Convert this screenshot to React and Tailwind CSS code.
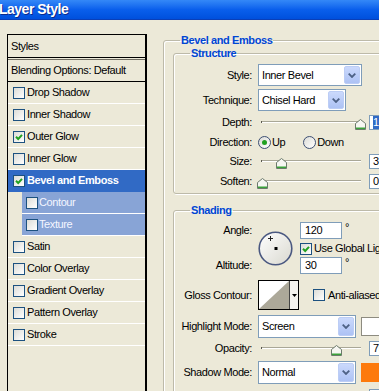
import React from 'react';

const styleRows = [
  { name: 'Drop Shadow' },
  { name: 'Inner Shadow' },
  { name: 'Outer Glow', checked: true },
  { name: 'Inner Glow' },
  { name: 'Bevel and Emboss', checked: true, active: true },
  { name: 'Contour', sub: true },
  { name: 'Texture', sub: true },
  { name: 'Satin' },
  { name: 'Color Overlay' },
  { name: 'Gradient Overlay' },
  { name: 'Pattern Overlay' },
  { name: 'Stroke' },
];

function Check({ checked }) {
  return (
    <span className="flex h-[12px] w-[12px] shrink-0 items-center justify-center border border-[#1c5180] bg-gradient-to-br from-[#dcdcd7] to-white">
      {checked && (
        <svg width="8" height="8" viewBox="0 0 8 8">
          <path d="M1 3.8 L3.2 6 L7 1.8" fill="none" stroke="#21a121" strokeWidth="2" />
        </svg>
      )}
    </span>
  );
}

function Radio({ checked }) {
  return (
    <span className="flex h-[13px] w-[13px] shrink-0 items-center justify-center rounded-full border border-[#3d4f73] bg-gradient-to-br from-[#dcdcd7] to-white">
      {checked && <span className="h-[5px] w-[5px] rounded-full bg-[#21a121]" />}
    </span>
  );
}

function Select({ value, width }) {
  return (
    <div className={`flex h-full items-center border border-[#7f9db9] bg-white pl-[3px] ${width}`}>
      <span>{value}</span>
      <span className="ml-auto mr-[1px] flex h-[calc(100%-2px)] w-[16px] items-center justify-center rounded-[2px] border border-[#bccdf5] bg-gradient-to-b from-[#cbd9fc] to-[#adc2f4]">
        <svg width="8" height="5" viewBox="0 0 8 5">
          <path d="M0.7 0.7 L4 4 L7.3 0.7" fill="none" stroke="#4d6185" strokeWidth="1.8" />
        </svg>
      </span>
    </div>
  );
}

function Thumb() {
  return (
    <svg width="11" height="11" viewBox="0 0 11 11">
      <path d="M5.5 0.5 L10.5 4.5 V10.5 H0.5 V4.5 Z" fill="#f6f6f2" stroke="#6c7a6c" />
      <rect x="1" y="8.5" width="9" height="1.5" fill="#3aa23a" />
    </svg>
  );
}

function Slider({ pos }) {
  return (
    <div className="relative h-[16px] w-[106px]">
      <div className="absolute left-[4px] right-[3px] top-[7px] h-[2px] border-t border-b border-t-[#a9a797] border-b-white" />
      <div className="absolute left-[3px] top-[7px] h-[2px] w-[1px] bg-[#5a5a50]" />
      <div className={`absolute top-[5px] h-[11px] ${pos}`}>
        <Thumb />
      </div>
    </div>
  );
}

function ValueBox({ children }) {
  return (
    <div className="ml-[5px] flex h-[15px] w-[40px] items-center border border-[#7f9db9] bg-white pl-[3px]">
      {children}
    </div>
  );
}

function Row({ label, className, children }) {
  return (
    <div className={`flex items-center ${className}`}>
      <span className="w-[78px] shrink-0 text-right">{label}</span>
      <div className="ml-[6px] flex h-full items-center">{children}</div>
    </div>
  );
}

function Legend({ children }) {
  return <legend className="ml-[16px] px-[1px] font-bold leading-[13px] text-[#0046d5]">{children}</legend>;
}

export default function App() {
  return (
    <div className="h-[391px] w-[379px] overflow-hidden bg-[#ece9d8] font-['Liberation_Sans',Arial,sans-serif] text-[11px] leading-[13px] tracking-[-0.4px] text-black">
      {/* Title bar */}
      <div className="h-[20px] border-b border-[#0a3fb8] bg-gradient-to-b from-[#3488f7] via-[#0a5fec] to-[#0050dd]">
        <span className="-ml-[1px] text-[14px] font-bold leading-[18px] tracking-[-0.5px] text-white [text-shadow:1px_1px_0_#0c2a8a]">
          Layer Style
        </span>
      </div>

      <div className="flex items-start pt-[14px]">
        {/* Styles list */}
        <div className="ml-[7px] h-[380px] w-[140px] shrink-0 border-t border-l border-r-2 border-black">
          <div className="flex h-[23px] items-center border-b border-black pl-[3px]">Styles</div>
          <div className="h-[2px] border-b border-[#716f64]" />
          <div className="flex h-[22px] items-center border-b border-black pl-[3px]">Blending Options: Default</div>
          {styleRows.map((row) =>
            row.sub ? (
              <div key={row.name} className="flex h-[22px] pl-[14px]">
                <div className="flex flex-1 items-center gap-[1px] border-b border-white bg-[#88a4d6] pl-[4px] text-[#f4f6ff]">
                  <Check />
                  <span>{row.name}</span>
                </div>
              </div>
            ) : (
              <div
                key={row.name}
                className={`flex h-[22px] items-center gap-[2px] border-b pl-[5px] ${
                  row.active ? 'border-[#316ac5] bg-[#316ac5] font-bold text-white' : 'border-white'
                }`}
              >
                <Check checked={row.checked} />
                <span>{row.name}</span>
              </div>
            )
          )}
        </div>

        {/* Settings */}
        <fieldset className="ml-[16px] h-[400px] w-[260px] shrink-0 rounded-[3px] border border-[#bdbaa9] shadow-[inset_1px_1px_0_#fff]">
          <Legend>Bevel and Emboss</Legend>

          <fieldset className="ml-[9px] w-[240px] rounded-[3px] border border-[#bdbaa9] pb-[4px] shadow-[inset_1px_1px_0_#fff,1px_1px_0_#fff]">
            <Legend>Structure</Legend>
            <Row label="Style:" className="mt-[4px] h-[22px]">
              <Select value="Inner Bevel" width="w-[104px]" />
            </Row>
            <Row label="Technique:" className="mt-[3px] h-[22px]">
              <Select value="Chisel Hard" width="w-[88px]" />
            </Row>
            <Row label="Depth:" className="mt-[3px] h-[16px]">
              <Slider pos="left-[97px]" />
              <ValueBox>
                <span className="bg-[#316ac5] text-white">100</span>
              </ValueBox>
            </Row>
            <Row label="Direction:" className="mt-[4px] h-[16px]">
              <Radio checked />
              <span className="ml-[1px]">Up</span>
              <span className="ml-[18px]">
                <Radio />
              </span>
              <span className="ml-[1px]">Down</span>
            </Row>
            <Row label="Size:" className="mt-[3px] h-[16px]">
              <Slider pos="left-[18px]" />
              <ValueBox>3</ValueBox>
            </Row>
            <Row label="Soften:" className="mt-[4px] h-[16px]">
              <Slider pos="-left-[1px]" />
              <ValueBox>0</ValueBox>
            </Row>
          </fieldset>

          <fieldset className="ml-[9px] mt-[10px] h-[300px] w-[240px] rounded-[3px] border border-[#bdbaa9] shadow-[inset_1px_1px_0_#fff]">
            <Legend>Shading</Legend>

            <div className="mt-[5px] flex">
              <div className="flex h-[52px] w-[78px] shrink-0 flex-col justify-between text-right">
                <span className="leading-[17px]">Angle:</span>
                <span className="leading-[17px]">Altitude:</span>
              </div>
              <div className="ml-[6px] mt-[9px]">
                <svg width="35" height="35" viewBox="0 0 35 35">
                  <defs>
                    <linearGradient id="dial" x1="0" y1="0" x2="1" y2="1">
                      <stop offset="0" stopColor="#ffffff" />
                      <stop offset="1" stopColor="#d9d8cf" />
                    </linearGradient>
                  </defs>
                  <circle cx="17.5" cy="17.5" r="16.3" fill="url(#dial)" stroke="#4a5880" strokeWidth="1.6" />
                  <path d="M12.5 5 V10 M10 7.5 H15" stroke="#222" strokeWidth="1" />
                  <rect x="16.5" y="16" width="3" height="3" fill="#000" />
                </svg>
              </div>
              <div className="ml-[7px] flex flex-col">
                <div className="flex">
                  <div className="flex h-[17px] w-[42px] items-center border border-[#7f9db9] bg-white pl-[4px]">120</div>
                  <span className="ml-[3px] leading-[10px]">°</span>
                </div>
                <div className="mt-[3px] flex h-[13px] items-center gap-[2px]">
                  <Check checked />
                  <span className="whitespace-nowrap">Use Global Light</span>
                </div>
                <div className="mt-[2px] flex">
                  <div className="flex h-[17px] w-[42px] items-center border border-[#7f9db9] bg-white pl-[4px]">30</div>
                  <span className="ml-[3px] leading-[10px]">°</span>
                </div>
              </div>
            </div>

            <Row label="Gloss Contour:" className="mt-[6px] h-[30px]">
              <div className="flex h-[30px] w-[41px] border border-black bg-white">
                <svg width="30" height="28" viewBox="0 0 30 28">
                  <polygon points="0,28 30,0 30,28" fill="#aca899" />
                </svg>
                <div className="flex flex-1 items-center justify-center border-l border-[#444] bg-[#f4f3ee]">
                  <svg width="5" height="3" viewBox="0 0 5 3">
                    <polygon points="0,0 5,0 2.5,3" fill="#000" />
                  </svg>
                </div>
              </div>
              <span className="ml-[14px]">
                <Check />
              </span>
              <span className="ml-[3px] whitespace-nowrap">Anti-aliased</span>
            </Row>

            <Row label="Highlight Mode:" className="mt-[5px] h-[23px]">
              <Select value="Screen" width="w-[98px]" />
              <div className="ml-[5px] h-[19px] w-[25px] border border-[#8d8b80] bg-white" />
            </Row>
            <Row label="Opacity:" className="mt-[2px] h-[16px]">
              <Slider pos="left-[73px]" />
              <ValueBox>75</ValueBox>
            </Row>
            <Row label="Shadow Mode:" className="mt-[5px] h-[23px]">
              <Select value="Normal" width="w-[98px]" />
              <div className="ml-[5px] h-[19px] w-[25px] bg-[#fd7a0c]" />
            </Row>
            <Row label="Opacity:" className="mt-[4px] h-[16px]">
              <Slider pos="left-[97px]" />
              <ValueBox>75</ValueBox>
            </Row>
          </fieldset>
        </fieldset>
      </div>
    </div>
  );
}
